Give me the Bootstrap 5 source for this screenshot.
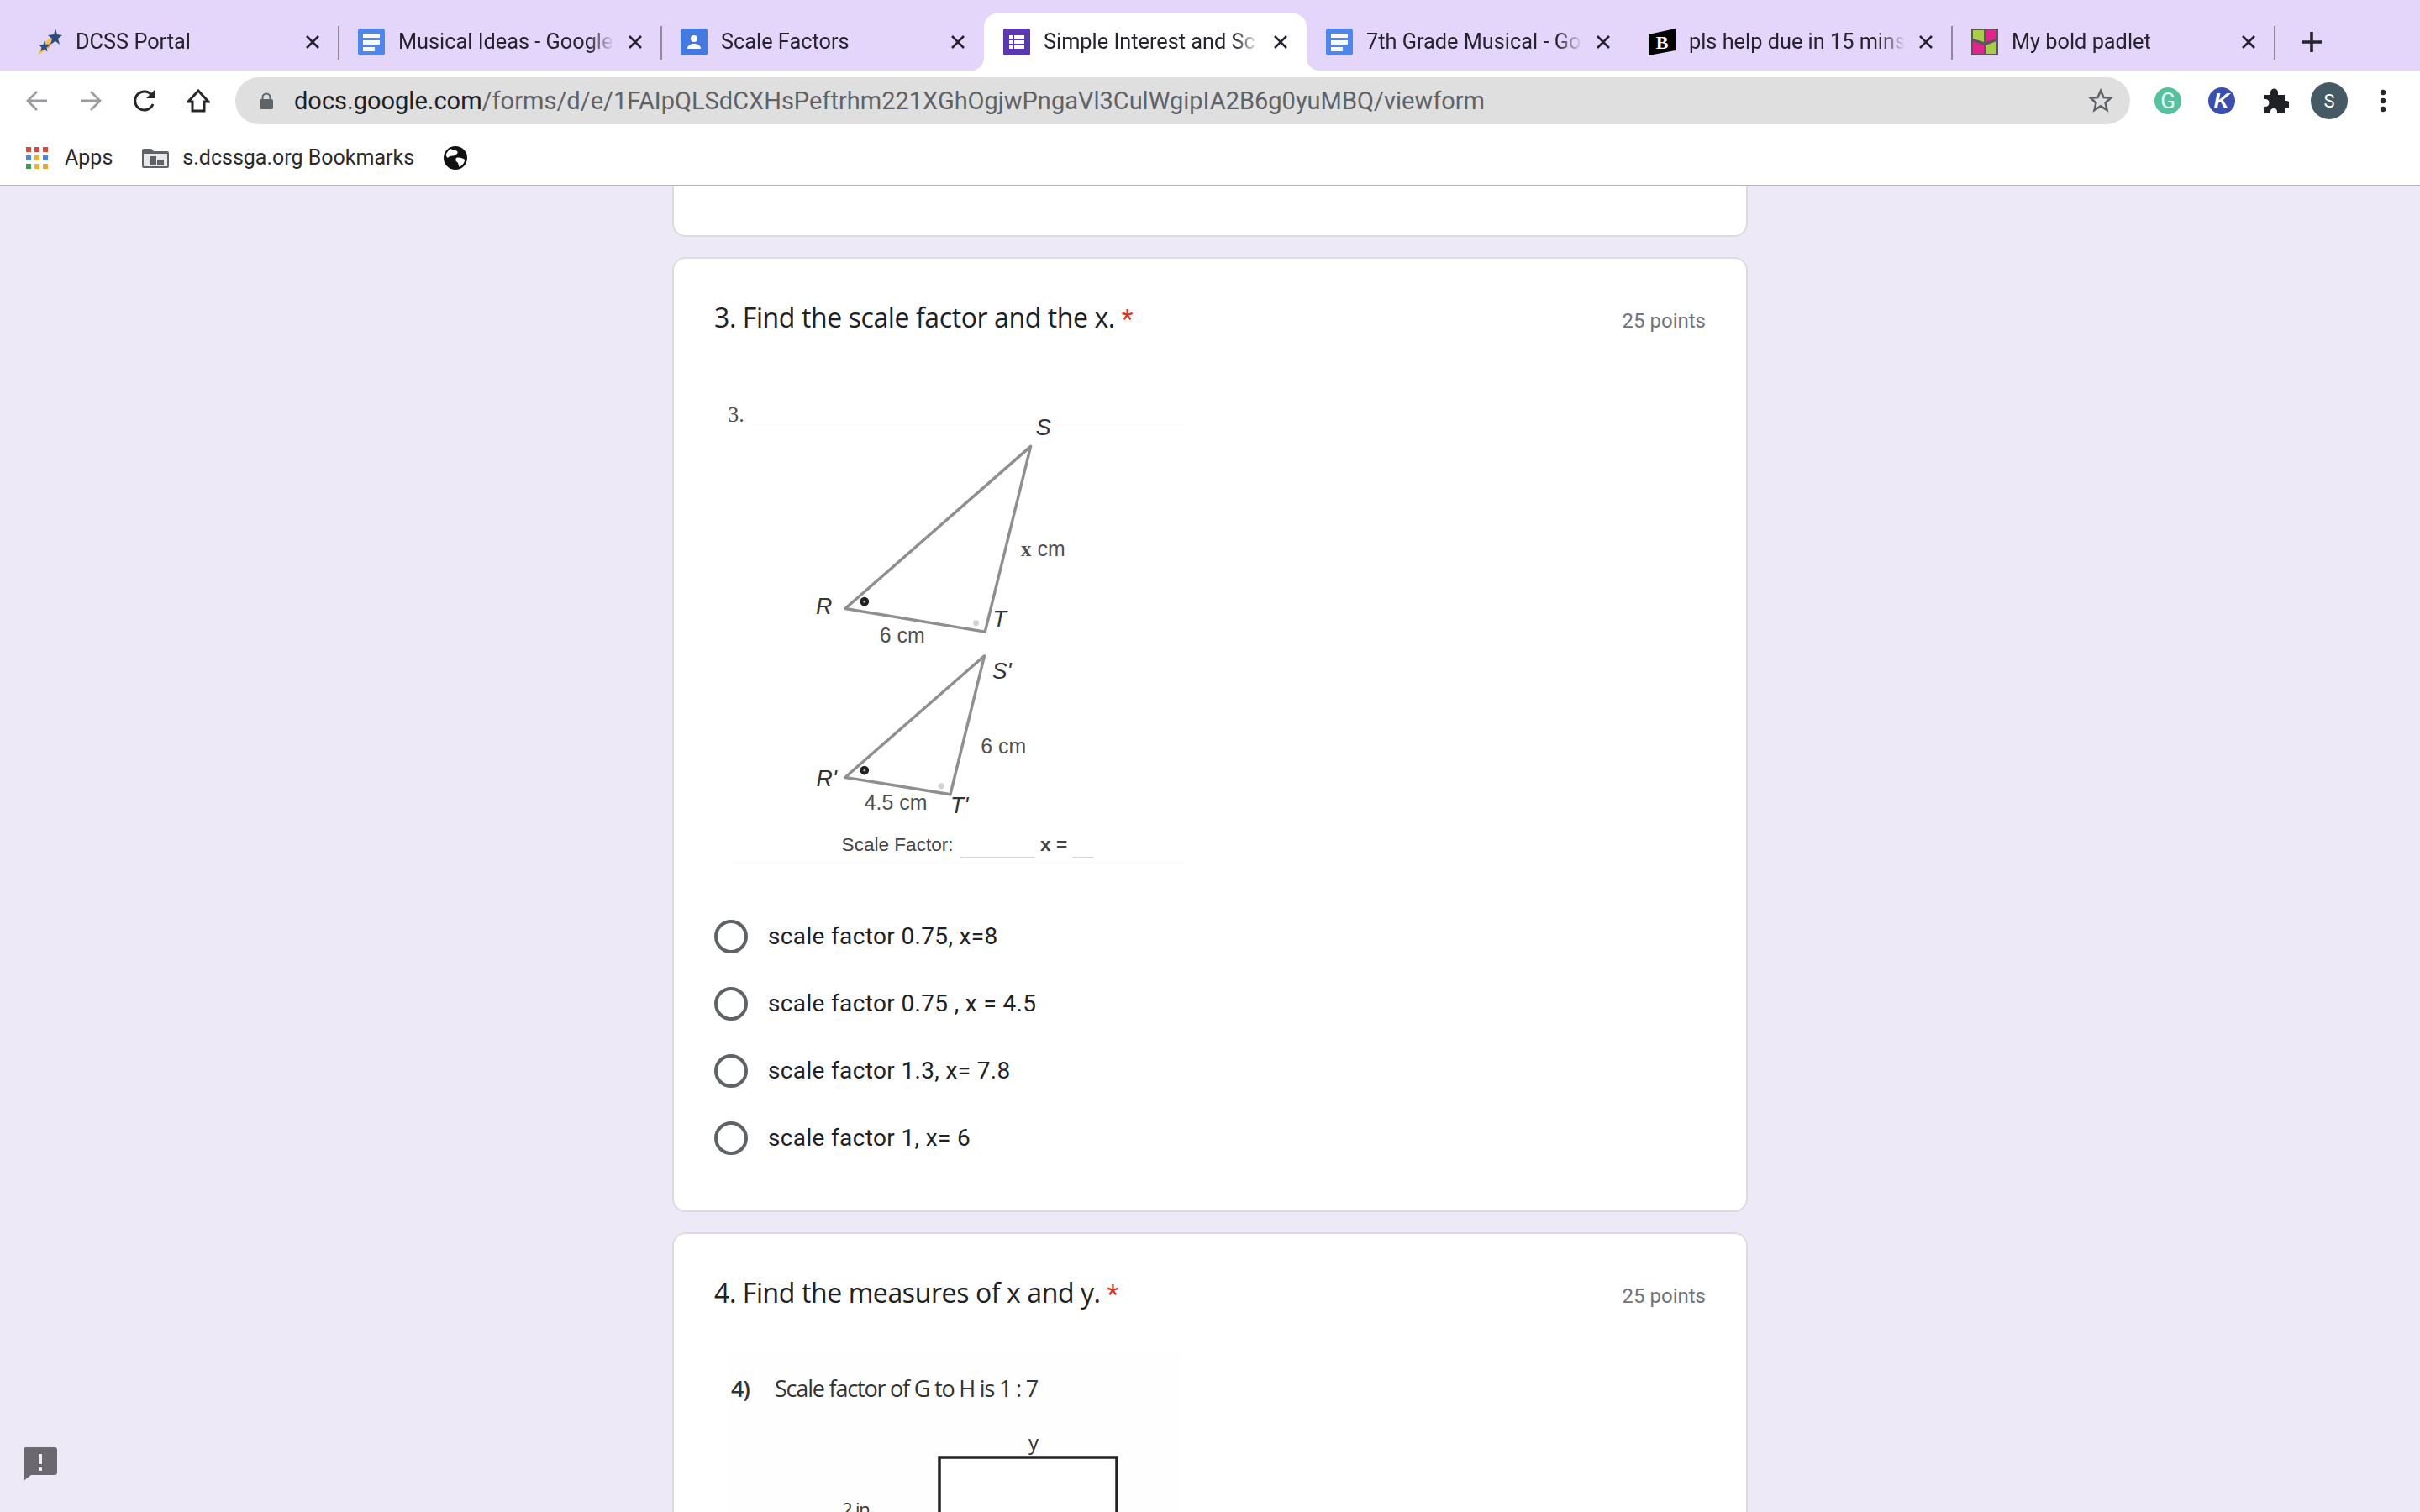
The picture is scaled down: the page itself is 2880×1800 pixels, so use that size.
<!DOCTYPE html>
<html lang="en">
<head>
  <meta charset="UTF-8">
  <meta name="viewport" content="width=device-width, initial-scale=1">
  <title>Simple Interest and Scale Factors</title>
  <link href="https://cdn.jsdelivr.net/npm/bootstrap@5.3.2/dist/css/bootstrap.min.css" rel="stylesheet">
  <style>
    html, body { height: 1800px; overflow: hidden; }
    body { background: #ede9f7; font-family: Roboto, "Liberation Sans", sans-serif; color: #202124; }

    /* browser chrome */
    .tab-strip { height: 84px; background: #e4d6fb; padding-left: 19px; }
    .tab-item { width: 384px; height: 68px; margin-top: 16px; padding-left: 23px; position: relative; }
    .tab-item.sep::after { content: ""; position: absolute; right: -1px; top: 15px; height: 40px; width: 2px; background: #8f8a9a; }
    .tab-item.current { background: #fff; border-radius: 16px 16px 0 0; }
    .tab-item.current::before, .tab-item.current .flare { content: ""; position: absolute; bottom: 0; width: 16px; height: 16px; }
    .tab-item.current::before { left: -16px; background: radial-gradient(circle at 0 0, transparent 16px, #fff 16.5px); }
    .tab-item.current .flare { right: -16px; background: radial-gradient(circle at 100% 0, transparent 16px, #fff 16.5px); }
    .tab-ico { width: 32px; height: 32px; flex: none; }
    .tab-name { font-size: 25.3px; margin-left: 16px; width: 257px; flex: none; white-space: nowrap; color: #26222e; line-height: 32px;
      -webkit-mask-image: linear-gradient(to right, #000 226px, transparent 257px); mask-image: linear-gradient(to right, #000 226px, transparent 257px); }
    .tab-x { width: 18px; height: 18px; flex: none; margin-left: 16px; }
    .tab-plus { margin: 36px 0 0 30px; width: 28px; height: 28px; }

    .tool-row { height: 84px; background: #fff; padding: 0 12px 12px; }
    .tool-btn { width: 64px; height: 64px; flex: none; }
    .url-box { height: 56px; flex: 1; margin: 0 13px 0 12px; border-radius: 28px; background: #dfdfdf; padding: 0 20px 0 28px; font-size: 29px; }
    .url-host { color: #202124; }
    .url-path { color: #5f6368; }
    .url-text { margin: 1px 0 0 24px; white-space: nowrap; }

    .mark-row { height: 54px; background: #fff; border-bottom: 2px solid #b5b3ba; padding: 0 0 12px 31px; font-size: 25px; color: #2a2a2e; }
    .mark-row span { white-space: nowrap; }
    .mark-apps { margin-left: 20px; }
    .mark-folder { margin-left: 35px; }
    .mark-label { margin-left: 16px; }
    .mark-globe { margin-left: 35px; }

    /* form */
    .form-col { width: 1280px; margin: 0 auto; }
    .form-box { border: 2px solid #dadce0; border-radius: 16px; background: #fff; margin-bottom: 24px; }
    .form-stub { height: 60px; border-top: 0; border-radius: 0 0 16px 16px; }
    .form-item { padding: 48px 48px 46px; }
    .q-title { font-family: "Open Sans", Roboto, sans-serif; font-size: 32px; line-height: 44px; letter-spacing: -.4px; color: #202124; }
    .q-star { color: #d93025; font-family: Roboto, sans-serif; }
    .q-points { font-size: 24px; color: #70757a; line-height: 44px; padding-top: 4px; }
    .q-pic { display: block; margin-top: 47px; }
    .q-pic-next { display: block; margin-top: 44px; }
    .opt-list { margin-top: 34px; }
    .opt-row { height: 80px; }
    .opt-row .form-check-input { width: 40px; height: 40px; margin: 0; border: 4px solid #5f6368; background-color: #fff; flex: none; }
    .opt-row label { margin-left: 24px; font-size: 28px; letter-spacing: .35px; color: #202124; }

    .report-ico { position: fixed; left: 28px; top: 1723px; width: 40px; height: 40px; }
  </style>
</head>
<body>

  <header>
    <div class="tab-strip d-flex">
      <div class="tab-item sep d-flex align-items-center">
        <svg class="tab-ico" viewBox="0 0 32 32"><path d="M3 32 L8 19 L20 9 L17 22 Z" fill="#f2c35a"/><path d="M13 18 L20 17 L15 24 Z" fill="#e79a4a"/><path d="M24 0l2 7 6 1-5 4 2 7-5-4-6 4 2-7-5-4 7-1z" fill="#2b4a7e"/><path d="M11 14l1.500 5 5 .5-4 3 1 5-4-3-4 3 1-5-3-3 5-.5z" fill="#27508f"/></svg>
        <div class="tab-name">DCSS Portal</div>
        <svg class="tab-x" viewBox="0 0 18 18"><path d="M2 2l14 14M16 2L2 16" stroke="#26222e" stroke-width="2.600"/></svg>
      </div>
      <div class="tab-item sep d-flex align-items-center">
        <svg class="tab-ico" viewBox="0 0 32 32"><rect width="32" height="32" rx="3" fill="#4f86ec"/><path d="M6 6h20v5H6zM6 14h20v5H6zM6 22h14v5H6z" fill="#fff" opacity=".95"/></svg>
        <div class="tab-name">Musical Ideas - Google</div>
        <svg class="tab-x" viewBox="0 0 18 18"><path d="M2 2l14 14M16 2L2 16" stroke="#26222e" stroke-width="2.600"/></svg>
      </div>
      <div class="tab-item d-flex align-items-center">
        <svg class="tab-ico" viewBox="0 0 32 32"><rect width="32" height="32" rx="3" fill="#4479e0"/><circle cx="16" cy="12" r="4" fill="#fff"/><path d="M8 24c0-4 4-6 8-6s8 2 8 6z" fill="#fff"/></svg>
        <div class="tab-name">Scale Factors</div>
        <svg class="tab-x" viewBox="0 0 18 18"><path d="M2 2l14 14M16 2L2 16" stroke="#26222e" stroke-width="2.600"/></svg>
      </div>
      <div class="tab-item current d-flex align-items-center">
        <svg class="tab-ico" viewBox="0 0 32 32"><rect width="32" height="32" rx="2" fill="#5b37b0"/><path d="M7 8h4v4H7zM13 8h12v4H13zM7 14h4v4H7zM13 14h12v4H13zM7 20h4v4H7zM13 20h12v4H13z" fill="#fff"/></svg>
        <div class="tab-name">Simple Interest and Sc</div>
        <svg class="tab-x" viewBox="0 0 18 18"><path d="M2 2l14 14M16 2L2 16" stroke="#26222e" stroke-width="2.600"/></svg>
        <i class="flare"></i>
      </div>
      <div class="tab-item d-flex align-items-center">
        <svg class="tab-ico" viewBox="0 0 32 32"><rect width="32" height="32" rx="3" fill="#4f86ec"/><path d="M6 6h20v5H6zM6 14h20v5H6zM6 22h14v5H6z" fill="#fff" opacity=".95"/></svg>
        <div class="tab-name">7th Grade Musical - Go</div>
        <svg class="tab-x" viewBox="0 0 18 18"><path d="M2 2l14 14M16 2L2 16" stroke="#26222e" stroke-width="2.600"/></svg>
      </div>
      <div class="tab-item sep d-flex align-items-center">
        <svg class="tab-ico" viewBox="0 0 32 32"><path d="M0 7L32 0V26L0 32Z" fill="#000"/><text x="16" y="24" text-anchor="middle" font-family="Liberation Serif" font-weight="700" font-size="22" fill="#fff">B</text></svg>
        <div class="tab-name">pls help due in 15 mins</div>
        <svg class="tab-x" viewBox="0 0 18 18"><path d="M2 2l14 14M16 2L2 16" stroke="#26222e" stroke-width="2.600"/></svg>
      </div>
      <div class="tab-item sep d-flex align-items-center">
        <svg class="tab-ico" viewBox="0 0 32 32"><rect width="32" height="32" fill="#5c5560"/><path d="M2 2h13v14l-13-4z" fill="#a9cc4a"/><path d="M17 2h13v10l-13 4z" fill="#e0268c"/><path d="M2 15l13 5v10H2z" fill="#e0268c"/><path d="M30 15l-13 5v10h13z" fill="#a9cc4a"/></svg>
        <div class="tab-name">My bold padlet</div>
        <svg class="tab-x" viewBox="0 0 18 18"><path d="M2 2l14 14M16 2L2 16" stroke="#26222e" stroke-width="2.600"/></svg>
      </div>
      <svg class="tab-plus" viewBox="0 0 28 28"><path d="M14 2v24M2 14h24" stroke="#26222e" stroke-width="3.600"/></svg>
    </div>

    <div class="tool-row d-flex align-items-center">
      <div class="tool-btn d-flex align-items-center justify-content-center">
        <svg width="28" height="28" viewBox="0 0 28 28"><path d="M26 14H4M14 3L3 14l11 11" fill="none" stroke="#9a9ca0" stroke-width="2.800"/></svg>
      </div>
      <div class="tool-btn d-flex align-items-center justify-content-center">
        <svg width="28" height="28" viewBox="0 0 28 28"><path d="M2 14h22M14 3l11 11-11 11" fill="none" stroke="#9a9ca0" stroke-width="2.800"/></svg>
      </div>
      <div class="tool-btn d-flex align-items-center justify-content-center">
        <svg width="30" height="30" viewBox="0 0 30 30"><path d="M25 19a11 11 0 1 1-1-10" fill="none" stroke="#26272b" stroke-width="3"/><path d="M27 2v10H17z" fill="#26272b"/></svg>
      </div>
      <div class="tool-btn d-flex align-items-center justify-content-center">
        <svg width="28" height="28" viewBox="0 0 28 28"><path d="M14 2L2 15h5v11h14V15h5z" fill="none" stroke="#26272b" stroke-width="3"/></svg>
      </div>
      <div class="url-box d-flex align-items-center">
        <svg width="18" height="20" viewBox="0 0 18 20"><path d="M4.500 9V6a4.500 4.500 0 0 1 9 0v3" fill="none" stroke="#5f6368" stroke-width="2"/><rect x="1" y="8" width="16" height="12" rx="2" fill="#5f6368"/></svg>
        <div class="url-text flex-grow-1"><span class="url-host">docs.google.com</span><span class="url-path">/forms/d/e/1FAIpQLSdCXHsPeftrhm221XGhOgjwPngaVl3CulWgipIA2B6g0yuMBQ/viewform</span></div>
        <svg width="30" height="30" viewBox="0 0 30 30"><path d="M15 3l3.500 8 8.500.8-6.400 5.700 1.900 8.500L15 21.400 7.500 26l1.900-8.500L3 11.800l8.500-.8z" fill="none" stroke="#5f6368" stroke-width="2.600"/></svg>
      </div>
      <div class="tool-btn d-flex align-items-center justify-content-center">
        <svg width="32" height="32" viewBox="0 0 32 32"><circle cx="16" cy="16" r="16" fill="#57c09f"/><text x="16" y="25" text-anchor="middle" font-family="Roboto" font-size="26" fill="#e9f7f2">G</text></svg>
      </div>
      <div class="tool-btn d-flex align-items-center justify-content-center">
        <svg width="32" height="32" viewBox="0 0 32 32"><circle cx="16" cy="16" r="16" fill="#3a4fae"/><text x="16" y="25" text-anchor="middle" font-family="Liberation Sans" font-weight="700" font-style="italic" font-size="26" fill="#fff">K</text></svg>
      </div>
      <div class="tool-btn d-flex align-items-center justify-content-center">
        <svg width="32" height="30" viewBox="0 0 32 30"><path d="M2 8h8V5a4.500 4.500 0 0 1 9 0v3h8v7h2a4.500 4.500 0 0 1 0 9h-2v6H18v-2a4 4 0 0 0-8 0v2H2v-8h2a4.500 4.500 0 0 0 0-9H2z" fill="#202124"/></svg>
      </div>
      <div class="tool-btn d-flex align-items-center justify-content-center">
        <svg width="44" height="44" viewBox="0 0 44 44"><circle cx="22" cy="22" r="22" fill="#455a64"/><text x="22" y="30" text-anchor="middle" font-family="Roboto" font-size="22" fill="#fff">S</text></svg>
      </div>
      <div class="tool-btn d-flex align-items-center justify-content-center">
        <svg width="8" height="28" viewBox="0 0 8 28"><circle cx="4" cy="4" r="3.200" fill="#26272b"/><circle cx="4" cy="14" r="3.200" fill="#26272b"/><circle cx="4" cy="24" r="3.200" fill="#26272b"/></svg>
      </div>
    </div>

    <div class="mark-row d-flex align-items-center">
      <svg width="26" height="26" viewBox="0 0 26 26"><path d="M0 0h6v6H0zM10 0h6v6h-6zM20 0h6v6h-6z" fill="#d9483b"/><path d="M0 10h6v6H0z" fill="#4a86e8"/><path d="M10 10h6v6h-6z" fill="#f1b02e"/><path d="M20 10h6v6h-6z" fill="#4a86e8"/><path d="M0 20h6v6H0z" fill="#3a9b56"/><path d="M10 20h6v6h-6z" fill="#f1b02e"/><path d="M20 20h6v6h-6z" fill="#e8a33d"/></svg>
      <span class="mark-apps">Apps</span>
      <svg class="mark-folder" width="32" height="24" viewBox="0 0 32 24"><path d="M0 3a2 2 0 0 1 2-2h9l3 3h16a2 2 0 0 1 2 2v16a2 2 0 0 1-2 2H2a2 2 0 0 1-2-2z" fill="#5f6368"/><rect x="2" y="7" width="28" height="15" fill="#e8e8ea"/><path d="M9 10h8v11H9zM18 14h8v7h-8z" fill="#5f6368"/></svg>
      <span class="mark-label">s.dcssga.org Bookmarks</span>
      <svg class="mark-globe" width="28" height="28" viewBox="0 0 28 28"><circle cx="14" cy="14" r="14" fill="#111"/><path d="M8 3c3 2 6 1 8 3s-1 4-3 5-5 0-7 2-3-1-3-3 3-5 5-7zM15 14c3-1 8 0 10 2 0 4-3 7-6 9-2-2-1-5-3-6s-2-4-1-5z" fill="#fff"/></svg>
    </div>
  </header>

  <main class="form-col">
    <div class="form-box form-stub"></div>

    <section class="form-box form-item">
      <div class="d-flex justify-content-between align-items-start">
        <div class="q-title">3. Find the scale factor and the x. <span class="q-star">*</span></div>
        <div class="q-points">25 points</div>
      </div>
      <svg class="q-pic" width="560" height="590" viewBox="26 0 1463 1542">
        <path d="M145 145H1483M85 1506H1483" stroke="#fafafa" stroke-width="3"/>
        <text x="68" y="132" font-family="Liberation Serif" font-size="68" fill="#4a4a4a">3.</text>
        <path d="M1010 210L433 715L868 787Z" fill="none" stroke="#8f8f8f" stroke-width="9" stroke-linejoin="round"/>
        <path d="M866 862L433 1240L760 1293Z" fill="none" stroke="#8f8f8f" stroke-width="9" stroke-linejoin="round"/>
        <circle cx="493" cy="693" r="9" fill="#aaa" stroke="#222" stroke-width="10"/>
        <circle cx="493" cy="1218" r="9" fill="#aaa" stroke="#222" stroke-width="10"/>
        <circle cx="840" cy="760" r="9" fill="#d2d2d2"/>
        <circle cx="732" cy="1267" r="9" fill="#d2d2d2"/>
        <g font-family="Liberation Sans" font-style="italic" font-size="70" fill="#333">
          <text x="1026" y="176">S</text>
          <text x="342" y="732">R</text>
          <text x="892" y="772">T</text>
          <text x="890" y="932">S'</text>
          <text x="343" y="1268">R'</text>
          <text x="760" y="1350">T'</text>
        </g>
        <g font-family="Liberation Sans" font-size="65" fill="#505050">
          <text x="980" y="552"><tspan font-family="Liberation Serif" font-weight="700">x</tspan> cm</text>
          <text x="540" y="820">6 cm</text>
          <text x="855" y="1165">6 cm</text>
          <text x="493" y="1342">4.5 cm</text>
        </g>
        <g font-family="Liberation Sans" font-size="59" fill="#444">
          <text x="422" y="1468">Scale Factor:</text>
          <text x="1040" y="1468" font-weight="700">x =</text>
        </g>
        <path d="M790 1490H1023M1140 1490H1205" stroke="#c8c8c8" stroke-width="4"/>
      </svg>
      <div class="opt-list">
        <div class="opt-row d-flex align-items-center">
          <input class="form-check-input" type="radio" name="q3" id="q3a">
          <label for="q3a">scale factor 0.75, x=8</label>
        </div>
        <div class="opt-row d-flex align-items-center">
          <input class="form-check-input" type="radio" name="q3" id="q3b">
          <label for="q3b">scale factor 0.75 , x = 4.5</label>
        </div>
        <div class="opt-row d-flex align-items-center">
          <input class="form-check-input" type="radio" name="q3" id="q3c">
          <label for="q3c">scale factor 1.3, x= 7.8</label>
        </div>
        <div class="opt-row d-flex align-items-center">
          <input class="form-check-input" type="radio" name="q3" id="q3d">
          <label for="q3d">scale factor 1, x= 6</label>
        </div>
      </div>
    </section>

    <section class="form-box form-item">
      <div class="d-flex justify-content-between align-items-start">
        <div class="q-title">4. Find the measures of x and y. <span class="q-star">*</span></div>
        <div class="q-points">25 points</div>
      </div>
      <svg class="q-pic-next" width="560" height="320" viewBox="850 1610 560 320">
        <rect x="866" y="1610" width="540" height="320" fill="#fefefe"/>
        <g font-family="Open Sans" font-size="27" fill="#333" letter-spacing="-1.200">
          <text x="870" y="1664" font-weight="600">4)</text>
          <text x="922" y="1664">Scale factor of G to H is 1 : 7</text>
          <text x="1224" y="1727" font-size="24">y</text>
          <text x="1002" y="1806" font-size="22">2 in</text>
        </g>
        <rect x="1118" y="1736" width="211" height="180" fill="#fff" stroke="#222" stroke-width="3.500"/>
      </svg>
    </section>
  </main>

  <svg class="report-ico" viewBox="0 0 40 40"><path d="M3 0h34a3 3 0 0 1 3 3v27a3 3 0 0 1-3 3H9l-9 7V3a3 3 0 0 1 3-3z" fill="#6b6870"/><path d="M18 8h4v12h-4zM18 24h4v4h-4z" fill="#ede9f7"/></svg>

  <script src="https://cdn.jsdelivr.net/npm/bootstrap@5.3.2/dist/js/bootstrap.bundle.min.js"></script>
</body>
</html>
